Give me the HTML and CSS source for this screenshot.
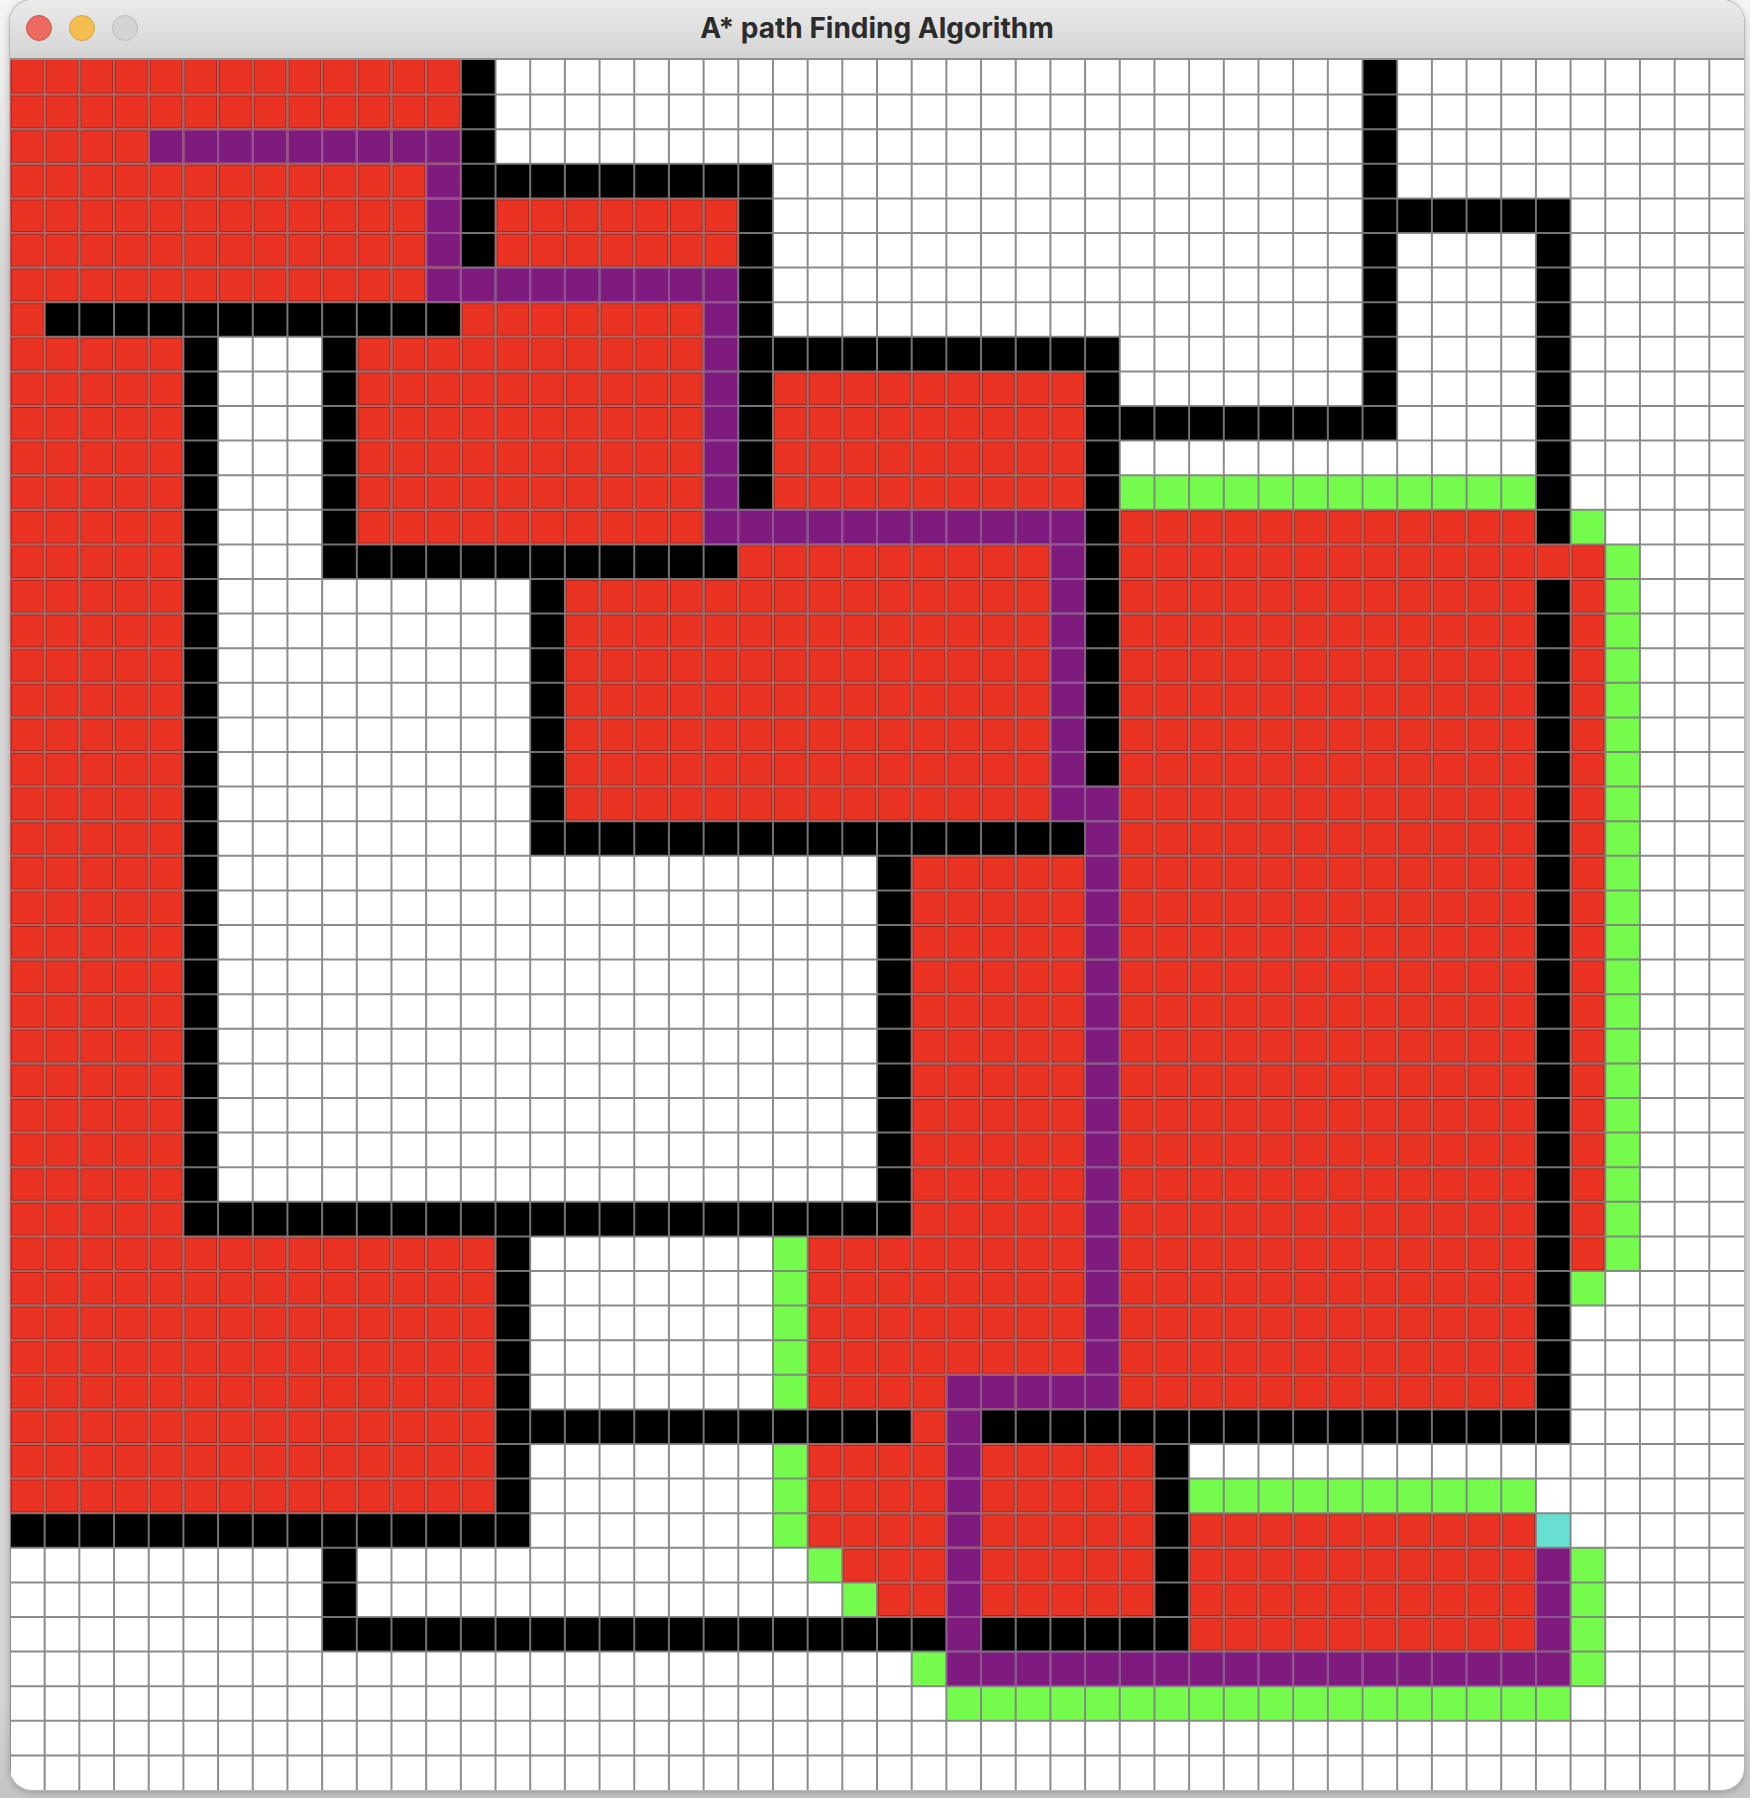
FILE: index.html
```html
<!DOCTYPE html>
<html lang="en">
<head>
<meta charset="utf-8">
<title>A* path Finding Algorithm</title>
<link rel="stylesheet" href="styles.css">
</head>
<body>
<main class="window">
  <header class="titlebar">
    <div class="controls">
      <button class="control close" type="button" aria-label="Close"></button>
      <button class="control minimize" type="button" aria-label="Minimize"></button>
      <button class="control zoom" type="button" aria-label="Zoom" disabled></button>
    </div>
    <h1 class="title">A* path Finding Algorithm</h1>
  </header>
  <svg class="board" viewBox="0 0 50 50" preserveAspectRatio="none" role="img" aria-label="Search grid, 50 by 50 cells">
    <defs>
      <path id="rules" d="M0 0v50M0 1h50M0 2h50M0 3h50M0 4h50M0 5h50M0 6h50M0 7h50M0 8h50M0 9h50M0 10h50M0 11h50M0 12h50M0 13h50M0 14h50M0 15h50M0 16h50M0 17h50M0 18h50M0 19h50M0 20h50M0 21h50M0 22h50M0 23h50M0 24h50M0 25h50M0 26h50M0 27h50M0 28h50M0 29h50M0 30h50M0 31h50M0 32h50M0 33h50M0 34h50M0 35h50M0 36h50M0 37h50M0 38h50M0 39h50M0 40h50M0 41h50M0 42h50M0 43h50M0 44h50M0 45h50M0 46h50M0 47h50M0 48h50M0 49h50M1 0v50M2 0v50M3 0v50M4 0v50M5 0v50M6 0v50M7 0v50M8 0v50M9 0v50M10 0v50M11 0v50M12 0v50M13 0v50M14 0v50M15 0v50M16 0v50M17 0v50M18 0v50M19 0v50M20 0v50M21 0v50M22 0v50M23 0v50M24 0v50M25 0v50M26 0v50M27 0v50M28 0v50M29 0v50M30 0v50M31 0v50M32 0v50M33 0v50M34 0v50M35 0v50M36 0v50M37 0v50M38 0v50M39 0v50M40 0v50M41 0v50M42 0v50M43 0v50M44 0v50M45 0v50M46 0v50M47 0v50M48 0v50M49 0v50"/>
      <path id="closed" d="M0 0h13v7H0zM0 7h1v1H0zM0 8h5v26H0zM0 34h14v8H0zM14 4h7v2h-7zM13 7h7v1h-7zM10 8h10v6H10zM22 9h9v4h-9zM32 13h12v26H32zM44 14h2v1h-2zM45 15h1v20h-1zM21 14h9v1h-9zM16 15h14v7H16zM26 23h5v11h-5zM23 34h8v5h-8zM26 39h1v1h-1zM23 40h10v3H23zM24 43h9v1h-9zM25 44h8v1h-8zM34 42h10v4H34z"/>
      <path id="route" d="M4 2h9v1H4zM12 3h1v4h-1zM13 6h8v1h-8zM20 7h1v7h-1zM21 13h10v1H21zM30 14h1v8h-1zM31 21h1v18h-1zM27 38h4v1h-4zM27 39h1v8h-1zM28 46h17v1H28zM44 43h1v3h-1z"/>
      <clipPath id="in-closed"><use href="#closed"/></clipPath>
      <clipPath id="in-route"><use href="#route"/></clipPath>
    </defs>
    <!-- visited cells -->
    <use class="closed" href="#closed"/>
    <g clip-path="url(#in-closed)">
      <use class="rules shade" href="#rules"/>
    </g>
    <!-- frontier cells -->
    <path class="open" d="M32 12h12v1H32zM45 13h1v1h-1zM46 14h1v21h-1zM45 35h1v1h-1zM22 34h1v5h-1zM22 40h1v3h-1zM23 43h1v1h-1zM24 44h1v1h-1zM34 41h10v1H34zM45 43h1v4h-1zM26 46h1v1h-1zM27 47h18v1H27z"/>
    <!-- barriers -->
    <path class="wall" d="M13 0h1v6h-1zM14 3h8v1h-8zM21 4h1v9h-1zM1 7h12v1H1zM5 8h1v26H5zM9 8h1v7H9zM10 14h11v1H10zM15 15h1v8h-1zM16 22h15v1H16zM22 8h10v1H22zM31 9h1v12h-1zM32 10h8v1h-8zM39 0h1v10h-1zM40 4h5v1h-5zM44 5h1v9h-1zM44 15h1v25h-1zM25 23h1v11h-1zM6 33h19v1H6zM14 34h1v9h-1zM0 42h14v1H0zM15 39h11v1H15zM28 39h16v1H28zM9 43h1v3H9zM10 45h17v1H10zM28 45h6v1h-6zM33 40h1v5h-1z"/>
    <!-- shortest path -->
    <use class="route" href="#route"/>
    <path class="goal" d="M44 42h1v1h-1z"/>
    <!-- cell rules, tinted where they cross visited cells and the path -->
    <use class="rules" href="#rules"/>
    <g clip-path="url(#in-closed)">
      <use class="rules on-closed" href="#rules"/>
    </g>
    <g clip-path="url(#in-route)">
      <use class="rules on-route" href="#rules"/>
    </g>
  </svg>
</main>
</body>
</html>
```
FILE: styles.css
```css
* {
  box-sizing: border-box;
}

body {
  margin: 0;
  min-height: 100vh;
  padding: 0 6px 8px 10px;
  background: linear-gradient(#f4f4f4, #d6d6d6 15%, #d6d6d6 94%, #c4c4c4);
  font-family: Inter, "Liberation Sans", sans-serif;
}

.window {
  display: flex;
  flex-direction: column;
  overflow: hidden;
  border-radius: 22px;
  background: #fff;
  box-shadow: 0 0 0 1px #b8b8b8, 0 2px 6px 1px rgba(0, 0, 0, .2);
}

.titlebar {
  display: grid;
  grid-template-columns: 1fr auto 1fr;
  align-items: center;
  height: 60px;
  padding: 0 16px 2px;
  border-bottom: 2px solid #8c8c8c;
  background: linear-gradient(#ebebeb, #d4d4d4);
}

.controls {
  display: flex;
  gap: 17px;
}

.control {
  width: 26px;
  height: 26px;
  padding: 0;
  border: 1px solid;
  border-radius: 50%;
}

.close {
  border-color: #c9574e;
  background: #ec6a5e;
}

.minimize {
  border-color: #d5a243;
  background: #f4bf4f;
}

.zoom {
  border-color: #bdbdbd;
  background: #d4d4d4;
}

.title {
  margin: 0;
  color: #2c2c2c;
  font-size: 28px;
  font-weight: 700;
  line-height: 32px;
}

.board {
  display: block;
  width: 100%;
  aspect-ratio: 1734 / 1730;
}

.closed {
  fill: #eb3323;
}

.open {
  fill: #75fb4c;
}

.wall {
  fill: #000;
}

.route {
  fill: #7f1a7f;
}

.goal {
  fill: #67e0d2;
}

.rules {
  fill: none;
  stroke: #808080;
  stroke-opacity: .9;
  stroke-width: 2px;
}

.rules,
#rules {
  vector-effect: non-scaling-stroke;
}

.shade {
  stroke: #000;
  stroke-opacity: .25;
  stroke-width: 4px;
}

.on-closed {
  stroke: #b85f5c;
}

.on-route {
  stroke: #955095;
}
```
